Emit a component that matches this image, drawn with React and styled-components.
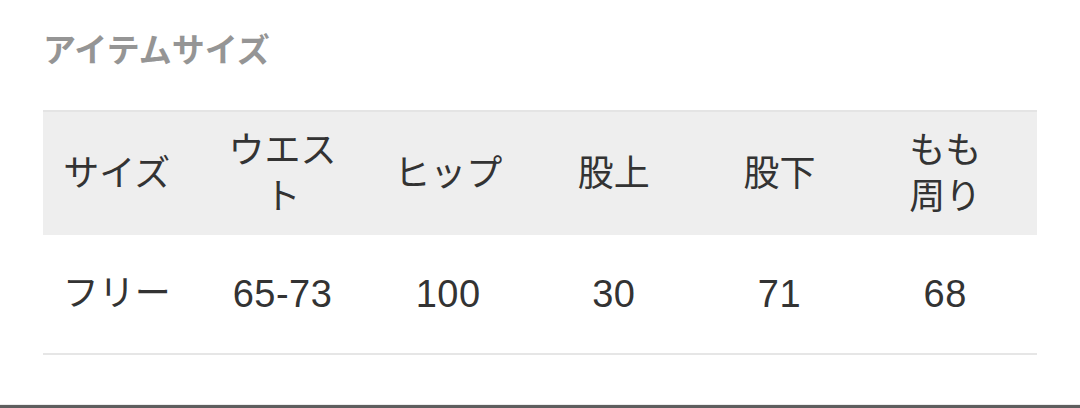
import React from "react";
import styled, { createGlobalStyle } from "styled-components";

const GlobalStyle = createGlobalStyle`
  html, body {
    margin: 0;
    padding: 0;
    background: #fff;
  }
  body {
    font-family: "Liberation Sans", "Noto Sans CJK JP", sans-serif;
    color: #333;
  }
`;

const Page = styled.div`
  width: 1080px;
  height: 408px;
  display: flex;
  flex-direction: column;
  overflow: hidden;
`;

const Section = styled.section`
  flex: 1;
  padding: 24px 43px 0 43px;
`;

const Title = styled.h2`
  margin: 0 0 38px 0;
  font-family: "Noto Sans CJK JP", sans-serif;
  font-size: 33px;
  line-height: 48px;
  font-weight: 700;
  color: #959595;
`;

const Table = styled.div`
  width: 994px;
  display: flex;
  flex-direction: column;
`;

const Row = styled.div`
  display: grid;
  grid-template-columns: repeat(6, 1fr);
  align-items: center;
  height: ${p => p.$head ? "125px" : "120px"};
  background: ${p => p.$head ? "#eeeeee" : "#fff"};
  border-top: ${p => p.$head ? "2px solid #e4e4e4" : "none"};
  border-bottom: ${p => p.$head ? "none" : "2px solid #e6e6e6"};
  box-sizing: border-box;
`;

const Cell = styled.div`
  padding-right: 18px;
  text-align: center;
  font-size: ${p => p.$num ? "38px" : "36px"};
  letter-spacing: ${p => p.$num ? "0.5px" : "0"};
  line-height: 46px;
  color: #333;
`;

const Footer = styled.div`
  height: 4px;
  border-top: 1px solid #ececec;
  background: #5e5e5e;
  box-sizing: border-box;
`;

const heads = ["サイズ", ["ウエス", "ト"], "ヒップ", "股上", "股下", ["もも", "周り"]];
const values = ["フリー", "65-73", "100", "30", "71", "68"];

export default function App() {
  return (
    <Page>
      <GlobalStyle />
      <Section>
        <Title>アイテムサイズ</Title>
        <Table>
          <Row $head>
            {heads.map((h, i) => (
              <Cell key={i}>
                {Array.isArray(h) ? <>{h[0]}<br />{h[1]}</> : h}
              </Cell>
            ))}
          </Row>
          <Row>
            {values.map((v, i) => <Cell key={i} $num={i > 0}>{v}</Cell>)}
          </Row>
        </Table>
      </Section>
      <Footer />
    </Page>
  );
}
